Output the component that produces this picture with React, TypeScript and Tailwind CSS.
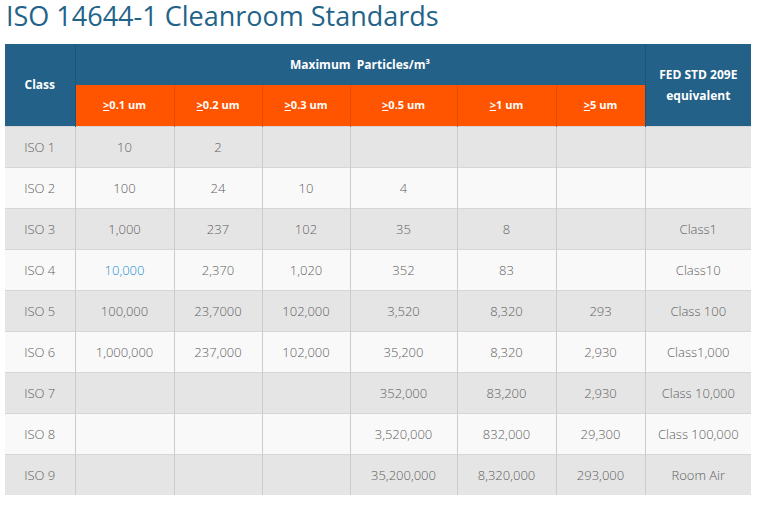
import React from "react";

const rows: string[][] = [
  ["ISO 1", "10", "2", "", "", "", "", ""],
  ["ISO 2", "100", "24", "10", "4", "", "", ""],
  ["ISO 3", "1,000", "237", "102", "35", "8", "", "Class1"],
  ["ISO 4", "10,000", "2,370", "1,020", "352", "83", "", "Class10"],
  ["ISO 5", "100,000", "23,7000", "102,000", "3,520", "8,320", "293", "Class 100"],
  ["ISO 6", "1,000,000", "237,000", "102,000", "35,200", "8,320", "2,930", "Class1,000"],
  ["ISO 7", "", "", "", "352,000", "83,200", "2,930", "Class 10,000"],
  ["ISO 8", "", "", "", "3,520,000", "832,000", "29,300", "Class 100,000"],
  ["ISO 9", "", "", "", "35,200,000", "8,320,000", "293,000", "Room Air"],
];

const sizes = ["0.1 um", "0.2 um", "0.3 um", "0.5 um", "1 um", "5 um"];

export default function App() {
  return (
    <div className="w-[763px] h-[506px] bg-white overflow-hidden" style={{ fontFamily: '"Open Sans", sans-serif' }}>
      <h1 className="pl-[6px] text-[27px] leading-[32px] font-normal text-[#23638a] whitespace-nowrap">
        ISO 14644-1 Cleanroom Standards
      </h1>
      <table className="ml-[5px] mt-[12px] w-[746px] table-fixed border-collapse text-center">
        <colgroup>
          <col className="w-[70px]" />
          <col className="w-[99px]" />
          <col className="w-[88px]" />
          <col className="w-[88px]" />
          <col className="w-[107px]" />
          <col className="w-[99px]" />
          <col className="w-[89px]" />
          <col className="w-[106px]" />
        </colgroup>
        <thead>
          <tr className="h-[41px]">
            <th rowSpan={2} className="bg-[#236189] text-white text-[12px] font-bold border-r border-[#1d5478]">
              Class
            </th>
            <th colSpan={6} className="bg-[#236189] text-white text-[12px] font-bold whitespace-pre">
              {"Maximum  Particles/m³"}
            </th>
            <th rowSpan={2} className="bg-[#236189] text-white text-[12px] font-bold leading-[21px] border-l border-[#1d5478]">
              FED STD 209E
              <br />
              equivalent
            </th>
          </tr>
          <tr className="h-[41px]">
            {sizes.map((s, i) => (
              <th
                key={s}
                className={`bg-[#ff5500] text-white text-[11px] font-bold ${i < 5 ? "border-r border-[#e44b00]" : ""}`}
              >
                <u>&gt;</u>
                {s}
              </th>
            ))}
          </tr>
        </thead>
        <tbody>
          {rows.map((r, ri) => (
            <tr key={ri} className={`h-[41px] ${ri % 2 === 0 ? "bg-[#e5e5e5]" : "bg-[#f9f9f9]"}`}>
              {r.map((c, ci) => (
                <td
                  key={ci}
                  className={`text-[13px] font-light pt-[2px] border-t border-[#d6d6d6] ${ci < 7 ? "border-r border-r-[#cccccc]" : ""} ${
                    ri === 3 && ci === 1 ? "text-[#1a8fd6]" : "text-[#5f5f5f]"
                  }`}
                >
                  {c}
                </td>
              ))}
            </tr>
          ))}
        </tbody>
      </table>
    </div>
  );
}
